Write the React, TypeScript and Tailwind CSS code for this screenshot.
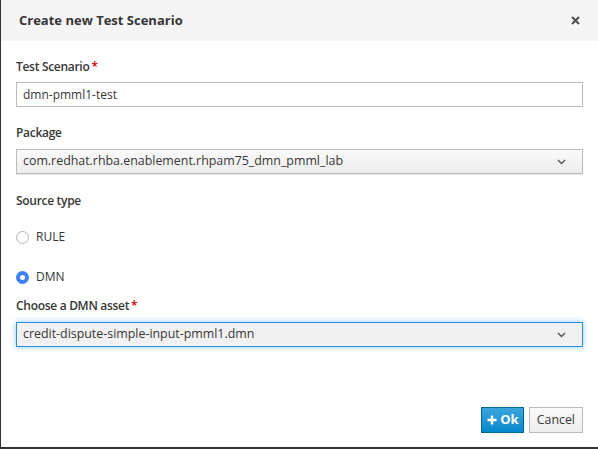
import React from "react";

const Chevron = () => (
  <svg width="9" height="6" viewBox="0 0 9 6" className="text-[#4d4d4d]">
    <path d="M1 1l3.5 3.5L8 1" fill="none" stroke="currentColor" strokeWidth="1.3" />
  </svg>
);

const Label = ({ text, required }: { text: string; required?: boolean }) => (
  <div className="h-4 text-[12px] leading-4 font-semibold tracking-[-0.3px] text-[#363636]">
    {text}
    {required && <span className="ml-[2px] text-[#c00]">*</span>}
  </div>
);

const Select = ({ value, focused }: { value: string; focused?: boolean }) => (
  <div
    className={
      focused
        ? "mt-[8px] flex h-[25px] items-center justify-between border border-[#2c8fd6] bg-[#f1f1f1] pl-[6px] pr-[16px] shadow-[0_0_6px_rgba(0,136,206,0.45)]"
        : "mt-[8px] flex h-[25px] items-center justify-between border border-[#bbb] bg-gradient-to-b from-[#fafafa] to-[#ededed] pl-[6px] pr-[16px] shadow-[0_1px_1px_rgba(3,3,3,0.08)]"
    }
  >
    <span className="text-[12.4px] text-[#363636]">{value}</span>
    <Chevron />
  </div>
);

const Radio = ({ label, checked }: { label: string; checked?: boolean }) => (
  <div className="flex h-4 items-center">
    {checked ? (
      <span className="flex h-[13px] w-[13px] items-center justify-center rounded-full bg-[#3e80ef]">
        <span className="h-[5px] w-[5px] rounded-full bg-white" />
      </span>
    ) : (
      <span className="h-[13px] w-[13px] rounded-full border border-[#b5b5b5] bg-white" />
    )}
    <span className="ml-[7px] text-[12px] text-[#363636]">{label}</span>
  </div>
);

export default function App() {
  return (
    <div
      className="h-[449px] w-[598px] bg-[#333] pl-px pb-[2px]"
      style={{ fontFamily: '"Open Sans", "Liberation Sans", sans-serif' }}
    >
      <div className="flex h-full flex-col bg-white">
        <div className="flex h-[41px] items-center justify-between bg-[#f5f5f5] pl-[18px] pr-[18px]">
          <span className="text-[13px] font-bold text-[#363636]">Create new Test Scenario</span>
          <svg width="9" height="9" viewBox="0 0 9 9" className="text-[#4d4d4d]">
            <path d="M1 1l7 7M8 1L1 8" stroke="currentColor" strokeWidth="2" />
          </svg>
        </div>

        <div className="flex flex-1 flex-col px-[15px] pt-[18px]">
          <Label text="Test Scenario" required />
          <div className="mt-[7px] flex h-[25px] items-center border border-[#bbb] bg-white px-[6px] text-[12px] text-[#363636]">
            dmn-pmml1-test
          </div>

          <div className="mt-[18px]">
            <Label text="Package" />
          </div>
          <Select value="com.redhat.rhba.enablement.rhpam75_dmn_pmml_lab" />

          <div className="mt-[19px]">
            <Label text="Source type" />
          </div>
          <div className="mt-[20px]">
            <Radio label="RULE" />
          </div>
          <div className="mt-[24px]">
            <Radio label="DMN" checked />
          </div>

          <div className="mt-[13px]">
            <Label text="Choose a DMN asset" required />
          </div>
          <Select value="credit-dispute-simple-input-pmml1.dmn" focused />

          <div className="mt-[60px] flex justify-end gap-[5px]">
            <button className="flex h-[26px] items-center gap-[3px] border border-[#00659c] bg-gradient-to-b from-[#39a5dc] to-[#0088ce] pl-[5px] pr-[4px] text-[13px] font-bold text-white">
              <svg width="10" height="10" viewBox="0 0 10 10">
                <path d="M5 0.5v9M0.5 5h9" stroke="white" strokeWidth="2.4" />
              </svg>
              Ok
            </button>
            <button className="h-[26px] border border-[#bbb] bg-gradient-to-b from-[#fafafa] to-[#ededed] px-[7px] text-[12.4px] text-[#363636]">
              Cancel
            </button>
          </div>
        </div>
      </div>
    </div>
  );
}
